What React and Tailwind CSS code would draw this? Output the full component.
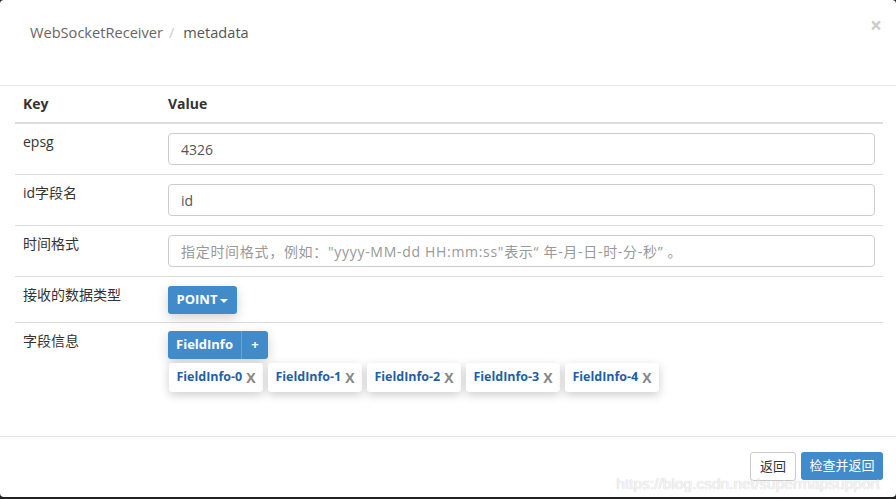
import React from 'react';

const font = { fontFamily: '"Open Sans", "Noto Sans CJK SC", sans-serif' };

const Row = ({ label, children, last }) => (
  <div className={`flex ${last ? '' : 'border-b border-[#ddd]'}`}>
    <div className="w-[145px] shrink-0 px-2 pt-[8px] text-[14px] leading-5 text-[#333]">{label}</div>
    <div className="flex-1 px-2 py-[9px]">{children}</div>
  </div>
);

const Input = ({ value, placeholder, wide }) => (
  <input
    readOnly
    value={value}
    placeholder={placeholder}
    className={`block h-[32px] w-full rounded-[4px] border border-[#ccc] px-3 text-[14px] text-[#555] placeholder:text-[#999] outline-none ${wide ? 'tracking-[0.7px]' : ''}`}
    style={font}
  />
);

const tags = ['FieldInfo-0', 'FieldInfo-1', 'FieldInfo-2', 'FieldInfo-3', 'FieldInfo-4'];

export default function App() {
  return (
    <div className="h-[499px] w-[896px] overflow-hidden bg-[#222]" style={font}>
      <div className="relative flex h-[497px] flex-col rounded-[4px] bg-white">
        {/* Header */}
        <div className="flex h-[86px] items-start border-b border-[#e5e5e5] px-[30px] pt-[22px]">
          <div className="flex items-center text-[14.6px] leading-5 text-[#666]">
            <span>WebSocketReceiver</span>
            <span className="px-[6px] text-[#ccc]">/</span>
            <span className="pl-[3px] text-[#555]">metadata</span>
          </div>
          <button className="ml-auto mt-[-7px] mr-[-16px] text-[21px] font-bold leading-none text-black opacity-20">×</button>
        </div>

        {/* Table */}
        <div className="ml-[15px] mr-[13px] flex-1">
          <div className="flex border-b-2 border-[#ddd]">
            <div className="w-[145px] shrink-0 px-2 py-2 text-[14px] font-bold leading-5 text-[#333]">Key</div>
            <div className="flex-1 px-2 py-2 text-[14px] font-bold leading-5 text-[#333]">Value</div>
          </div>
          <Row label="epsg">
            <Input value="4326" />
          </Row>
          <Row label="id字段名">
            <Input value="id" />
          </Row>
          <Row label="时间格式">
            <Input wide value="" placeholder={'指定时间格式，例如："yyyy-MM-dd HH:mm:ss"表示“ 年-月-日-时-分-秒” 。'} />
          </Row>
          <div className="flex border-b border-[#ddd]">
            <div className="w-[145px] shrink-0 px-2 pt-[8px] text-[14px] leading-5 text-[#333]">接收的数据类型</div>
            <div className="flex-1 px-2 pb-[8px] pt-[9px]">
              <button className="flex h-[28px] w-[69px] items-center justify-center gap-[3px] rounded-[3px] bg-[#428bca] text-[13px] font-bold text-white shadow-[0_4px_12px_rgba(0,0,0,0.18)]">
                POINT
                <span className="mt-[2px] h-0 w-0 border-x-[4px] border-t-[4px] border-x-transparent border-t-white"></span>
              </button>
            </div>
          </div>
          <div className="flex">
            <div className="w-[145px] shrink-0 px-2 pt-[8px] text-[14px] leading-5 text-[#333]">字段信息</div>
            <div className="flex-1 px-2 pt-[8px]">
              <div className="flex">
                <div className="flex h-[28px] overflow-hidden rounded-[3px] shadow-[0_4px_12px_rgba(0,0,0,0.18)]">
                  <span className="flex w-[73px] items-center justify-center bg-[#428bca] text-[13px] font-bold text-white">FieldInfo</span>
                  <span className="flex w-[27px] items-center justify-center border-l border-[#6aa4d6] bg-[#428bca] text-[13px] font-bold text-white">+</span>
                </div>
              </div>
              <div className="mt-[4px] flex gap-[5px] pl-px">
                {tags.map((t) => (
                  <div
                    key={t}
                    className="flex h-[29px] w-[94px] items-center justify-center gap-[4px] rounded-[3px] bg-white text-[12.5px] font-bold shadow-[0_3px_10px_rgba(0,0,0,0.2)]"
                  >
                    <span className="text-[#1f5fa8]">{t}</span>
                    <span className="text-[14px] leading-none text-[#888]">X</span>
                  </div>
                ))}
              </div>
            </div>
          </div>
        </div>

        {/* Footer */}
        <div className="flex h-[61px] items-start justify-end gap-[5px] border-t border-[#e5e5e5] pr-[13px] pt-[15px]">
          <button className="h-[29px] w-[46px] rounded-[3px] border border-[#ccc] bg-white text-[13px] text-[#333]">返回</button>
          <button className="h-[28px] w-[82px] rounded-[3px] bg-[#428bca] text-[13px] text-white">检查并返回</button>
        </div>

        <div
          className="pointer-events-none absolute bottom-[3px] right-[16px] text-[15.5px] leading-5 text-white/85 [text-shadow:0_0_1px_rgba(0,0,0,0.3)]"
          style={{ fontFamily: '"Liberation Sans", Arial, sans-serif' }}
        >
          https://blog.csdn.net/supermapsupport
        </div>
      </div>
    </div>
  );
}
